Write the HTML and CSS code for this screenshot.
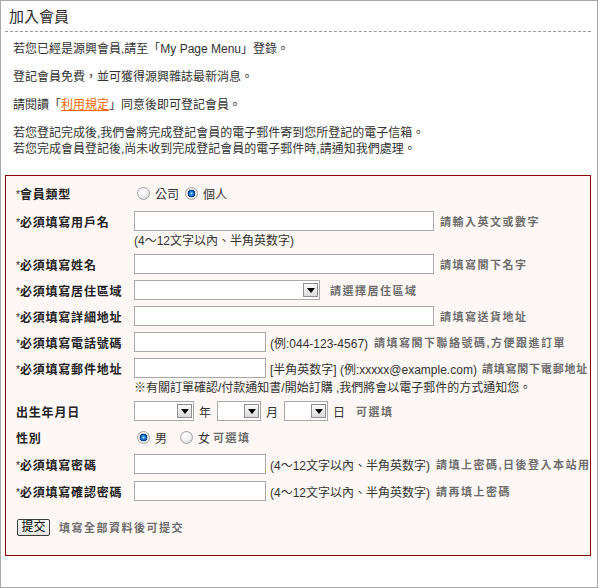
FILE: index.html
```html
<!DOCTYPE html>
<html lang="zh-Hant">
<head>
<meta charset="utf-8">
<title>加入會員</title>
<link rel="stylesheet" href="styles.css">
</head>
<body>
<div class="page">
  <h1 class="title">加入會員</h1>
  <div class="intro">
    <p>若您已經是源興會員,請至「My Page Menu」登錄。</p>
    <p>登記會員免費，並可獲得源興雜誌最新消息。</p>
    <p>請閱讀「<a href="#" class="link">利用規定</a>」同意後即可登記會員。</p>
    <p>若您登記完成後,我們會將完成登記會員的電子郵件寄到您所登記的電子信箱。<br>若您完成會員登記後,尚未收到完成登記會員的電子郵件時,請通知我們處理。</p>
  </div>
  <form class="reg">
    <div class="rows">
      <div class="row">
        <span class="lbl"><span class="req">*</span>會員類型</span>
        <input type="radio" name="type" class="radio first">
        <span class="opt">公司</span>
        <input type="radio" name="type" class="radio r2" checked>
        <span class="opt">個人</span>
      </div>
      <div class="row mt2">
        <span class="lbl"><span class="req">*</span>必須填寫用戶名</span>
        <input type="text" class="inp">
        <span class="hint">請輸入英文或數字</span>
      </div>
      <div class="note">(4～12文字以內、半角英数字)</div>
      <div class="row">
        <span class="lbl"><span class="req">*</span>必須填寫姓名</span>
        <input type="text" class="inp">
        <span class="hint">請填寫閣下名字</span>
      </div>
      <div class="row">
        <span class="lbl"><span class="req">*</span>必須填寫居住區域</span>
        <span class="sel region"><select></select><span class="arr"><svg width="8" height="5" viewBox="0 0 8 5"><path d="M0 0H8L4 5Z" fill="#000"/></svg></span></span>
        <span class="hint h10">請選擇居住區域</span>
      </div>
      <div class="row">
        <span class="lbl"><span class="req">*</span>必須填寫詳細地址</span>
        <input type="text" class="inp">
        <span class="hint">請填寫送貨地址</span>
      </div>
      <div class="row">
        <span class="lbl"><span class="req">*</span>必須填寫電話號碼</span>
        <input type="text" class="inp short">
        <span class="txt">(例:044-123-4567)</span>
        <span class="hint">請填寫閣下聯絡號碼,方便跟進訂單</span>
      </div>
      <div class="row">
        <span class="lbl"><span class="req">*</span>必須填寫郵件地址</span>
        <input type="text" class="inp short">
        <span class="txt">[半角英数字] (例:xxxxx@example.com)</span>
        <span class="hint tight">請填寫閣下電郵地址</span>
      </div>
      <div class="note">※有關訂單確認/付款通知書/開始訂購 ,我們將會以電子郵件的方式通知您。</div>
      <div class="row">
        <span class="lbl">出生年月日</span>
        <span class="sel y"><select></select><span class="arr"><svg width="8" height="5" viewBox="0 0 8 5"><path d="M0 0H8L4 5Z" fill="#000"/></svg></span></span>
        <span class="unit">年</span>
        <span class="sel m"><select></select><span class="arr"><svg width="8" height="5" viewBox="0 0 8 5"><path d="M0 0H8L4 5Z" fill="#000"/></svg></span></span>
        <span class="unit">月</span>
        <span class="sel m"><select></select><span class="arr"><svg width="8" height="5" viewBox="0 0 8 5"><path d="M0 0H8L4 5Z" fill="#000"/></svg></span></span>
        <span class="unit">日</span>
        <span class="hint h5">可選填</span>
      </div>
      <div class="row">
        <span class="lbl">性別</span>
        <input type="radio" name="sex" class="radio first" checked>
        <span class="opt">男</span>
        <input type="radio" name="sex" class="radio r2 wide">
        <span class="opt">女</span>
        <span class="hint h3">可選填</span>
      </div>
      <div class="row mt1">
        <span class="lbl"><span class="req">*</span>必須填寫密碼</span>
        <input type="password" class="inp short">
        <span class="txt">(4～12文字以內、半角英数字)</span>
        <span class="hint">請填上密碼,日後登入本站用</span>
      </div>
      <div class="row mt1">
        <span class="lbl"><span class="req">*</span>必須填寫確認密碼</span>
        <input type="password" class="inp short">
        <span class="txt">(4～12文字以內、半角英数字)</span>
        <span class="hint">請再填上密碼</span>
      </div>
      <div class="row submit">
        <button type="button" class="btn">提交</button>
        <span class="hint h9">填寫全部資料後可提交</span>
      </div>
    </div>
  </form>
</div>
</body>
</html>
```

FILE: styles.css
```css
html, body {
  margin: 0;
  padding: 0;
  background: #fff;
}

body {
  font-family: "Liberation Sans", "Noto Sans CJK TC", sans-serif;
  font-size: 12px;
  color: #333;
}

.page {
  width: 598px;
  height: 588px;
  box-sizing: border-box;
  border: 1px solid #a8a8a8;
  padding: 0 6px 0 4px;
}

.title {
  margin: 0;
  padding: 2px 0 0 4px;
  height: 28px;
  line-height: 28px;
  font-size: 15px;
  font-weight: normal;
  color: #2a2a2a;
  border-bottom: 1px dashed #9a9a9a;
}

.intro {
  padding: 9px 0 0 8px;
}

.intro p {
  margin: 0 0 12px;
  line-height: 16px;
}

.intro p:last-child {
  margin-bottom: 0;
}

.link {
  color: #ff6600;
  text-decoration: underline;
}

.reg {
  margin: 18px 0 0;
  border: 1px solid #880000;
  background: #fdf8f5;
  padding: 7px 10px 18px 10px;
}

.rows {
  display: flex;
  flex-direction: column;
  gap: 6px;
}

.row {
  display: flex;
  align-items: center;
  height: 20px;
  white-space: nowrap;
}

.mt2 { margin-top: 2px; }
.mt1 { margin-top: 1px; }

.lbl {
  width: 118px;
  flex: none;
  font-weight: bold;
  color: #222;
  letter-spacing: 0.8px;
}

.req {
  font-size: 10px;
  font-weight: normal;
  letter-spacing: 0;
  vertical-align: 1px;
}

.note {
  margin-top: -3px;
  padding-left: 118px;
  line-height: 14px;
  white-space: nowrap;
}

.inp {
  width: 300px;
  height: 20px;
  box-sizing: border-box;
  border: 1px solid #a9a9a9;
  background: #fff;
  margin: 0;
  padding: 0 2px;
  font: inherit;
  flex: none;
}

.inp.short {
  width: 132px;
}

.txt {
  margin-left: 4px;
}

.hint {
  margin-left: 6px;
  font-size: 11px;
  font-weight: bold;
  letter-spacing: 1.5px;
  color: #6e6e6e;
}

.hint.tight { letter-spacing: 0.8px; margin-left: 5px; }
.hint.h10 { margin-left: 10px; }
.hint.h5 { margin-left: 5px; }
.hint.h3 { margin-left: 3px; }
.hint.h9 { margin-left: 9px; }

.sel {
  display: inline-flex;
  align-items: center;
  height: 20px;
  box-sizing: border-box;
  border: 1px solid #a9a9a9;
  background: #fff;
  flex: none;
}

.sel select {
  -webkit-appearance: none;
  appearance: none;
  border: none;
  background: transparent;
  flex: 1;
  min-width: 0;
  height: 18px;
  margin: 0;
  padding: 0;
}

.arr {
  flex: none;
  width: 15px;
  height: 14px;
  margin-right: 1px;
  box-sizing: border-box;
  border: 1px solid #8e8e8e;
  background: linear-gradient(#fbfbfb, #dadada);
  display: flex;
  align-items: center;
  justify-content: center;
}

.sel.region { width: 186px; }
.sel.y { width: 60px; }
.sel.m { width: 44px; }

.unit {
  margin: 0 6px 0 5px;
}

.radio {
  -webkit-appearance: none;
  appearance: none;
  width: 13px;
  height: 13px;
  box-sizing: border-box;
  border-radius: 50%;
  border: 1px solid #a4a4a4;
  background: radial-gradient(circle at 40% 35%, #ffffff 0, #f2f2f2 45%, #cbcbcb 100%);
  margin: 0;
  flex: none;
}

.radio:checked {
  background: radial-gradient(circle at 50% 50%, #c8ecff 0, #3a9ae8 16%, #0d5cb0 34%, #083e7e 46%, #cfcfcf 52%, #fbfbfb 68%, #c6c6c6 100%);
}

.radio.first { margin-left: 3px; }
.radio.r2 { margin-left: 6px; }
.radio.r2.wide { margin-left: 13px; }

.opt {
  margin-left: 5px;
}

.submit {
  margin-top: 10px;
}

.btn {
  margin: 0 0 0 1px;
  width: 33px;
  height: 17px;
  padding: 0;
  box-sizing: border-box;
  border: 1px solid #3a3a3a;
  border-radius: 2px;
  background: linear-gradient(#fdfdfd, #e4e4e4);
  font-family: "Liberation Sans", "Noto Sans CJK TC", sans-serif;
  font-size: 12px;
  line-height: 14px;
  color: #000;
}
```
